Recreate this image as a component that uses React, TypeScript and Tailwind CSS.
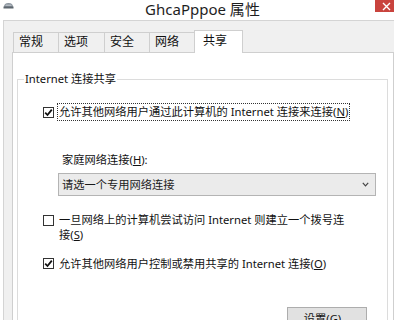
import React from "react";

const FONT = '"Noto Sans", "Noto Sans CJK SC", sans-serif';

function Check({ checked }: { checked: boolean }) {
  return (
    <div className="w-[11px] h-[11px] border border-[#333333] bg-white flex items-center justify-center shrink-0">
      {checked && (
        <svg width="9" height="9" viewBox="0 0 9 9">
          <path d="M1.2 4.6 L3.5 7 L7.8 1.6" fill="none" stroke="#111" strokeWidth="1.8" />
        </svg>
      )}
    </div>
  );
}

function Tab({ label, w }: { label: string; w: string }) {
  return (
    <div
      className={`${w} h-[20px] mt-[2px] -ml-px first:ml-0 border border-b-0 border-[#cfcfcf] bg-[#f0f0f0] text-[12px] leading-[18px] text-[#111] pl-[5px]`}
    >
      {label}
    </div>
  );
}

export default function App() {
  return (
    <div
      className="w-[394px] h-[320px] overflow-hidden bg-white text-[#111]"
      style={{ fontFamily: FONT }}
    >
      {/* Title bar */}
      <div className="h-[20px] flex items-start">
        <div className="w-[16px] pl-[3px] pt-[2px]">
          <svg width="11" height="7" viewBox="0 0 11 7">
            <path d="M1 5 Q1 1 5.5 1 Q10 1 10 5 Z" fill="#8a939c" />
            <rect x="0.5" y="4.5" width="10" height="2" fill="#5d666e" />
            <line x1="2.5" y1="3.2" x2="8.5" y2="3.2" stroke="#d8dde2" strokeWidth="0.8" />
          </svg>
        </div>
        <div className="flex-1 text-center text-[15px] leading-[19px] text-[#1e1e1e] pl-[14px]">
          GhcaPppoe 属性
        </div>
        <div className="w-[19px] h-[12px] bg-[#c9433d] flex items-center justify-end pr-[3px]">
          <svg width="9" height="9" viewBox="0 0 9 9">
            <path d="M1 1 L8 8 M8 1 L1 8" stroke="#fff" strokeWidth="1.4" />
          </svg>
        </div>
      </div>

      {/* Body */}
      <div className="ml-[3px] h-[300px] border-l border-t border-[#d4d4d4] bg-[#f0f0f0] pt-[9px]">
        {/* Tabs */}
        <div className="flex h-[22px] ml-[9px] relative z-10">
          <Tab label="常规" w="w-[46px]" />
          <Tab label="选项" w="w-[47px]" />
          <Tab label="安全" w="w-[46px]" />
          <Tab label="网络" w="w-[46px]" />
          <div className="w-[49px] h-[23px] -ml-[1px] border border-b-0 border-[#cfcfcf] bg-white text-[12px] leading-[20px] pl-[8px]">
            共享
          </div>
        </div>

        {/* Panel */}
        <div className="ml-[8px] w-[382px] h-[270px] bg-white border border-[#cfcfcf] border-b-0">
          <fieldset className="ml-[4px] mt-[19px] w-[371px] h-[260px] border border-[#dcdcdc]">
            <legend className="ml-[6px] px-[1px] text-[11.25px] leading-[14px]">
              Internet 连接共享
            </legend>

            {/* Checkbox 1 */}
            <div className="flex items-center pl-[25px] mt-[17px]">
              <Check checked />
              <span className="ml-[3px] border border-dotted border-[#333] px-[1px] text-[11.25px] leading-[16px]">
                允许其他网络用户通过此计算机的 Internet 连接来连接(<span className="underline">N</span>)
              </span>
            </div>

            {/* Home network label */}
            <div className="pl-[44px] mt-[32px] text-[11.25px] leading-[14px]">
              家庭网络连接(<span className="underline">H</span>):
            </div>

            {/* Dropdown */}
            <div className="ml-[40px] mt-[6px] w-[318px] h-[23px] border border-[#b4b4b4] bg-[#ebebeb] flex items-center pl-[3px] pr-[6px] text-[11.25px] leading-[14px] text-[#1a1a1a]">
              <span className="flex-1">请选一个专用网络连接</span>
              <svg width="7" height="5" viewBox="0 0 7 5">
                <path d="M0.8 0.8 L3.5 3.8 L6.2 0.8" fill="none" stroke="#444" strokeWidth="1.2" />
              </svg>
            </div>

            {/* Checkbox 2 */}
            <div className="flex items-start pl-[25px] mt-[16px]">
              <div className="mt-[3px]">
                <Check checked={false} />
              </div>
              <span className="ml-[5px] text-[11.25px] leading-[15px]">
                一旦网络上的计算机尝试访问 Internet 则建立一个拨号连
                <br />
                接(<span className="underline">S</span>)
              </span>
            </div>

            {/* Checkbox 3 */}
            <div className="flex items-center pl-[25px] mt-[14px]">
              <Check checked />
              <span className="ml-[5px] text-[11.25px] leading-[15px]">
                允许其他网络用户控制或禁用共享的 Internet 连接(<span className="underline">O</span>)
              </span>
            </div>

            {/* Settings button */}
            <div className="ml-[269px] mt-[36px] w-[80px] h-[23px] border border-[#adadad] bg-[#e1e1e1] flex items-center justify-center text-[11.25px] leading-[14px]">
              设置(<span className="underline">G</span>)...
            </div>
          </fieldset>
        </div>
      </div>
    </div>
  );
}
